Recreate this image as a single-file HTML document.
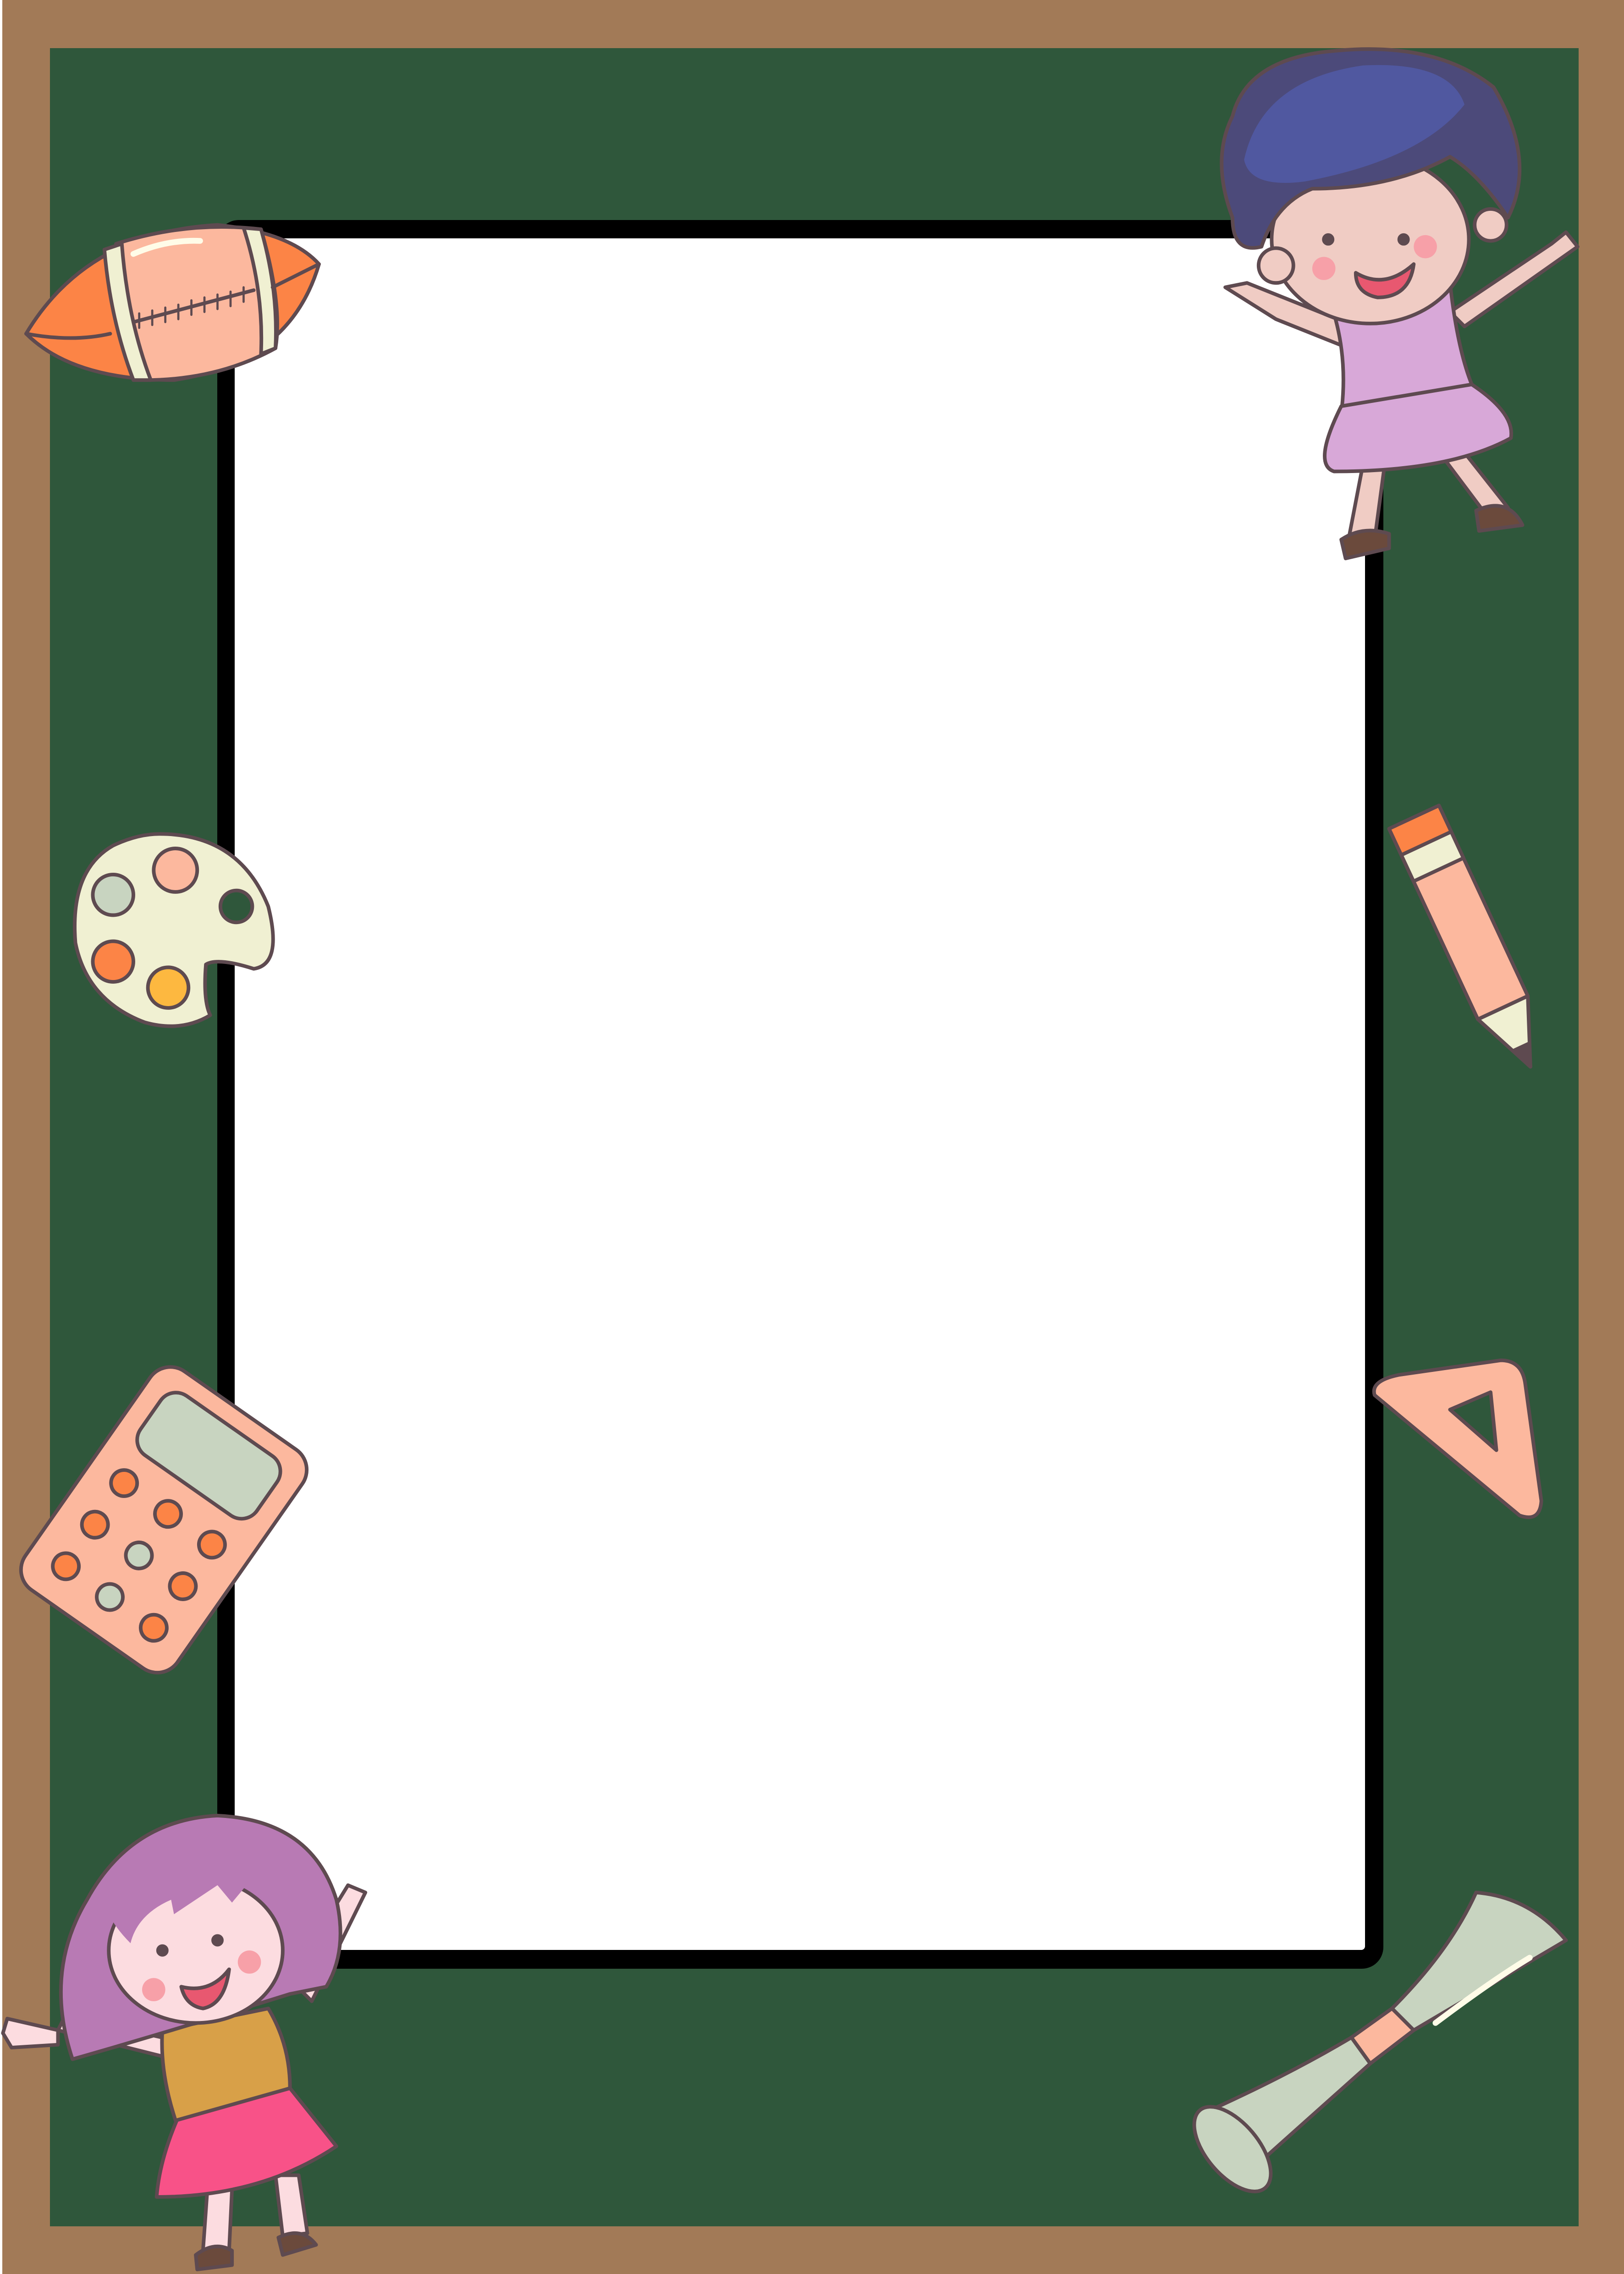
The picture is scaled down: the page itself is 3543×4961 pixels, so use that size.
<!DOCTYPE html>
<html><head><meta charset="utf-8"><style>
html,body{margin:0;padding:0}
body{width:3543px;height:4961px;position:relative;overflow:hidden;background:#fff}
#brown{position:absolute;left:5px;top:0;width:3538px;height:4961px;background:#A27A57}
#green{position:absolute;left:109px;top:105px;width:3335px;height:4752px;background:#2F573B}
#frame{position:absolute;left:474px;top:480px;width:2544px;height:3815px;background:#000;border-radius:47px}
#white{position:absolute;left:512px;top:520px;width:2466px;height:3734px;background:#fff;border-radius:8px}
svg{position:absolute;left:0;top:0}
</style></head><body>
<div id="brown"></div><div id="green"></div><div id="frame"></div><div id="white"></div>
<svg width="3543" height="4961" viewBox="0 0 1120 1568" stroke="#5E4A50" stroke-width="2.5" stroke-linejoin="round" stroke-linecap="round">
<!-- football -->
<g>
<path d="M18,230 Q60,160 150,155 Q200,160 220,182 Q200,250 120,262 Q50,262 18,230Z" fill="#FC8446"/>
<path d="M80,168 Q130,152 180,158 Q195,210 190,240 Q150,262 100,262 Q78,220 80,168Z" fill="#FCB89E"/>
<path d="M72,172 L84,168 Q88,220 104,262 L92,262 Q76,220 72,172Z" fill="#F0F0D2"/>
<path d="M168,157 L180,158 Q192,200 190,240 L180,244 Q182,200 168,157Z" fill="#F0F0D2"/>
<path d="M18,230 Q50,236 76,230" fill="none"/><path d="M188,198 L220,182" fill="none"/>
<path d="M92,222 L175,200" fill="none"/>
<path d="M96,216v10M105,214v10M114,212v10M123,210v10M132,207v10M141,205v10M150,203v10M159,201v10M168,198v10" fill="none" stroke-width="1.5"/>
<path d="M92,175 Q115,165 138,166" stroke="#FFFCE8" stroke-width="4" fill="none"/>
</g>
<!-- palette -->
<g>
<path d="M110,575 Q165,575 185,625 Q195,665 175,668 Q150,660 142,665 Q140,690 145,700 Q125,712 100,705 Q60,690 52,650 Q48,600 78,583 Q95,575 110,575Z" fill="#F0F0D2"/>
<circle cx="163" cy="625" r="11" fill="#2F573B"/>
<circle cx="121" cy="600" r="15" fill="#FCB89E"/>
<circle cx="78" cy="617" r="14" fill="#C8D4C0"/>
<circle cx="78" cy="663" r="14" fill="#FC8446"/>
<circle cx="116" cy="681" r="14" fill="#FDB840"/>
</g>
<!-- calculator -->
<g transform="rotate(35 113 1048)">
<rect x="49" y="956" width="128" height="184" rx="17" fill="#FCB89E"/>
<rect x="64" y="969" width="98" height="50" rx="13" fill="#C8D4C0"/>
<g fill="#FC8446"><circle cx="76" cy="1043" r="9"/><circle cx="113" cy="1043" r="9"/><circle cx="150" cy="1043" r="9"/><circle cx="76" cy="1078" r="9"/><circle cx="150" cy="1078" r="9"/><circle cx="76" cy="1113" r="9"/><circle cx="150" cy="1113" r="9"/></g>
<g fill="#C8D4C0"><circle cx="113" cy="1078" r="9"/><circle cx="113" cy="1113" r="9"/></g>
</g>
<!-- pencil -->
<g transform="rotate(-25 1012 640)">
<rect x="992" y="560" width="38" height="140" fill="#FCB89E"/>
<rect x="992" y="555" width="38" height="20" fill="#FC8446"/>
<rect x="992" y="575" width="38" height="20" fill="#F0F0D2"/>
<path d="M992,700 L1030,700 L1011,745Z" fill="#F0F0D2"/>
<path d="M1005,730 L1017,730 L1011,745Z" fill="#5E4A50"/>
</g>
<!-- triangle ruler -->
<path d="M948,962 Q945,952 965,948 L1035,938 Q1050,938 1052,955 L1063,1035 Q1062,1050 1048,1045 Z" fill="#FCB89E"/>
<path d="M1000,972 L1028,960 L1032,1000Z" fill="#2F573B"/>
<!-- scroll -->
<g>
<path d="M1018,1305 Q1055,1308 1080,1338 L975,1400 L960,1385 Q1000,1345 1018,1305Z" fill="#C8D4C0"/>
<path d="M960,1385 L975,1400 L945,1423 L932,1405Z" fill="#FCB89E"/>
<path d="M932,1405 L945,1423 L870,1490 L835,1455 Q890,1430 932,1405Z" fill="#C8D4C0"/>
<ellipse cx="850" cy="1482" rx="18" ry="35" transform="rotate(-40 850 1482)" fill="#C8D4C0"/>
<path d="M990,1395 Q1030,1365 1055,1350" stroke="#FFFCE8" stroke-width="4" fill="none"/>
</g>
<!-- top right kid -->
<g>
<path d="M860,195 L845,198 L880,220 L930,240 L935,225 Z" fill="#F0CCC4"/>
<path d="M1000,215 L1070,168 L1080,160 L1088,170 L1010,225Z" fill="#F0CCC4"/>
<path d="M940,320 L930,372 L948,372 L955,320Z" fill="#F0CCC4"/>
<path d="M995,315 L1025,355 L1040,350 L1010,312Z" fill="#F0CCC4"/>
<path d="M925,372 Q940,362 958,368 L958,378 L928,385Z" fill="#6B4A3C"/>
<path d="M1018,352 Q1040,342 1050,362 L1020,366Z" fill="#6B4A3C"/>
<path d="M918,210 L1000,195 Q1005,240 1015,265 L925,285 Q930,245 918,210Z" fill="#D8A8D8"/>
<path d="M925,280 L1015,265 Q1045,285 1042,302 Q1000,325 920,325 Q905,320 925,280Z" fill="#D8A8D8"/>
<ellipse cx="945" cy="165" rx="68" ry="58" fill="#F0CCC4"/>
<circle cx="880" cy="183" r="12" fill="#F0CCC4"/><circle cx="1028" cy="155" r="11" fill="#F0CCC4"/>
<path d="M850,150 Q835,110 850,80 Q860,40 920,35 Q990,28 1030,60 Q1060,110 1040,150 Q1020,120 1000,108 Q960,130 905,130 Q880,140 870,170 Q850,175 850,150Z" fill="#4C4A7A"/>
<path d="M858,110 Q870,55 940,45 Q1000,42 1010,72 Q980,110 900,125 Q862,130 858,110Z" fill="#5058A0" stroke="none"/>
<circle cx="916" cy="165" r="3" fill="#5E4A50"/><circle cx="968" cy="165" r="3" fill="#5E4A50"/>
<circle cx="913" cy="185" r="8" fill="#F7A0A8" stroke="none"/><circle cx="983" cy="170" r="8" fill="#F7A0A8" stroke="none"/>
<path d="M935,188 Q955,200 975,182 Q972,205 950,205 Q935,202 935,188Z" fill="#E85870"/>
</g>
<!-- bottom left girl -->
<g>
<path d="M40,1400 L5,1392 L2,1402 L8,1412 L40,1410Z" fill="#FCDCE0"/>
<path d="M200,1365 L240,1300 L252,1305 L215,1380Z" fill="#FCDCE0"/>
<path d="M143,1510 L140,1552 L158,1552 L160,1510Z" fill="#FCDCE0"/>
<path d="M190,1500 L195,1542 L212,1540 L206,1500Z" fill="#FCDCE0"/>
<path d="M135,1555 Q148,1545 160,1552 L160,1562 L136,1565Z" fill="#6B4A3C"/>
<path d="M192,1543 Q208,1535 218,1548 L195,1555Z" fill="#6B4A3C"/>
<path d="M40,1400 L120,1420 L125,1408 L45,1390Z" fill="#FCDCE0"/>
<path d="M112,1400 L185,1385 Q200,1410 200,1440 L122,1465 Q110,1430 112,1400Z" fill="#D8A048"/>
<path d="M122,1462 L200,1440 L232,1480 Q180,1515 108,1515 Q110,1490 122,1462Z" fill="#F85288"/>
<path d="M60,1310 Q90,1255 150,1252 Q215,1255 232,1310 Q240,1345 225,1370 L200,1375 Q120,1400 50,1420 Q30,1360 60,1310Z" fill="#B87AB4"/>
<ellipse cx="135" cy="1345" rx="60" ry="50" fill="#FCDCE0"/>
<path d="M75,1320 Q90,1285 150,1285 Q200,1290 210,1330 Q200,1310 170,1300 L160,1312 L150,1300 L120,1320 L118,1310 Q95,1320 90,1340 Q80,1330 75,1320Z" fill="#B87AB4" stroke="none"/>
<circle cx="112" cy="1345" r="3" fill="#5E4A50"/><circle cx="150" cy="1338" r="3" fill="#5E4A50"/>
<circle cx="106" cy="1372" r="8" fill="#F7A0A8" stroke="none"/><circle cx="172" cy="1353" r="8" fill="#F7A0A8" stroke="none"/>
<path d="M125,1370 Q145,1375 158,1358 Q155,1382 140,1385 Q128,1383 125,1370Z" fill="#E85870"/>
</g>
</svg>
</body></html>
